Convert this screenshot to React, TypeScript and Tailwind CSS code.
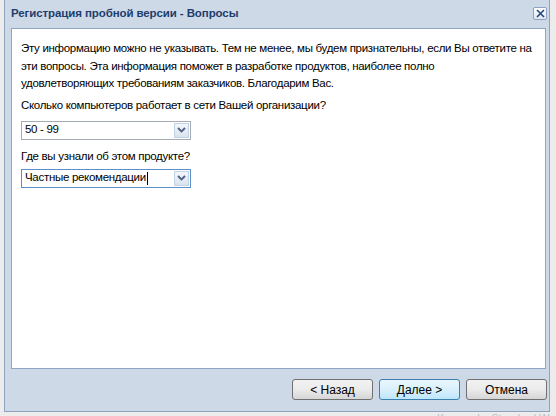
import React from "react";

function Combo({ value, focused }: { value: string; focused?: boolean }) {
  return (
    <div
      className={
        "flex h-[19px] w-[170px] items-stretch border bg-white " +
        (focused ? "border-[#5b8fc9]" : "border-[#a5acb5]")
      }
    >
      <div className="flex flex-1 items-center pl-[3px] text-black">
        {value}
        {focused && <span className="ml-[1px] inline-block h-[13px] w-[1px] bg-black" />}
      </div>
      <div className="m-[1px] flex w-[15px] items-center justify-center border border-[#c3d3e6] bg-gradient-to-b from-[#f4f7fb] to-[#d9e3ef]">
        <svg width="9" height="6" viewBox="0 0 9 6">
          <path d="M1 1 L4.5 4.5 L8 1" fill="none" stroke="#4d6185" strokeWidth="1.8" />
        </svg>
      </div>
    </div>
  );
}

function Button({ label, focused }: { label: string; focused?: boolean }) {
  return (
    <div
      className={
        "flex h-[21px] w-[81px] items-center justify-center rounded-[3px] border text-[12px] text-black " +
        (focused
          ? "border-[#3c7fb1] bg-gradient-to-b from-[#eaf6fd] via-[#d9f0fc] to-[#bee6fd]"
          : "border-[#707070] bg-gradient-to-b from-[#f2f2f2] via-[#ebebeb] to-[#d6d6d6]")
      }
    >
      {label}
    </div>
  );
}

export default function App() {
  return (
    <div className="h-[416px] w-[556px] overflow-hidden bg-[#ececec] font-['Liberation_Sans',sans-serif]">
      <div className="ml-[4px] flex h-[412px] w-[546px] flex-col border border-t-0 border-[#8fa3bd] bg-[#cdd9e7]">
        <div className="flex h-[28px] items-center justify-between pl-[6px] pr-[2px]">
          <span className="text-[11.5px] font-bold tracking-[-0.1px] text-[#1e3d6d]">
            Регистрация пробной версии - Вопросы
          </span>
          <div className="mb-[2px] flex h-[13px] w-[14px] items-center justify-center rounded-[2px] border border-[#8da3c1] bg-gradient-to-b from-[#ffffff] to-[#dfe7f1]">
            <svg width="9" height="9" viewBox="0 0 9 9">
              <path d="M1 1 L8 8 M8 1 L1 8" stroke="#24477a" strokeWidth="1.6" />
            </svg>
          </div>
        </div>
        <div className="ml-[6px] mr-[3px] h-[341px] border border-[#8fa6c2] bg-white px-[9px] pt-[11px] text-[11.5px] tracking-[-0.3px] text-black">
          <p className="whitespace-nowrap leading-[17.5px]">
            Эту информацию можно не указывать. Тем не менее, мы будем признательны, если Вы ответите на
            <br />
            эти вопросы. Эта информация поможет в разработке продуктов, наиболее полно
            <br />
            удовлетворяющих требованиям заказчиков. Благодарим Вас.
          </p>
          <p className="mt-[4px] leading-[17px]">Сколько компьютеров работает в сети Вашей организации?</p>
          <div className="mt-[7px]">
            <Combo value="50 - 99" />
          </div>
          <p className="mt-[8px] leading-[17px]">Где вы узнали об этом продукте?</p>
          <div className="mt-[4px]">
            <Combo value="Частные рекомендации" focused />
          </div>
        </div>
        <div className="flex flex-1 items-center justify-end gap-[6px] pr-[2px] pb-[1px]">
          <Button label="< Назад" />
          <Button label="Далее >" focused />
          <Button label="Отмена" />
        </div>
      </div>
      <div className="ml-[437px] h-[4px] overflow-hidden whitespace-nowrap text-[11px] leading-[13px] text-[#b7bcc4]">
        Kaspersky Standard Web Filter
      </div>
    </div>
  );
}
